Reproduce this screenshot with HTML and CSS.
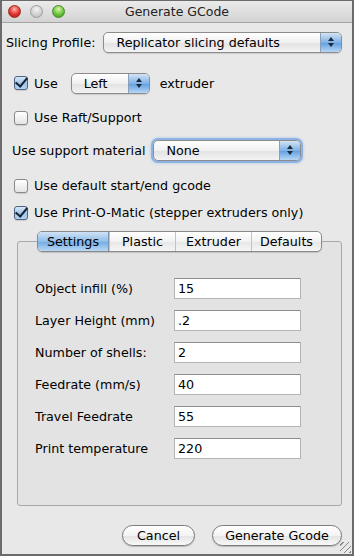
FILE: index.html
```html
<!DOCTYPE html>
<html lang="en">
<head>
    <meta charset="UTF-8">
    <title>Generate GCode</title>
    <link rel="stylesheet" href="styles.css">
</head>
<body>
    <div class="window">
        <div class="titlebar">
            <div class="lights">
                <span class="light red"></span>
                <span class="light gray"></span>
                <span class="light green"></span>
            </div>
            <div class="title">Generate GCode</div>
        </div>

        <div class="content">
            <div class="row profile-row">
                <span class="label">Slicing Profile:</span>
                <div class="select profile-select">
                    <span class="select-text">Replicator slicing defaults</span>
                    <span class="arrows"><span class="up"></span><span class="down"></span></span>
                </div>
            </div>

            <div class="row use-row">
                <span class="check checked"></span>
                <span class="label use-label">Use</span>
                <div class="select extruder-select">
                    <span class="select-text">Left</span>
                    <span class="arrows"><span class="up"></span><span class="down"></span></span>
                </div>
                <span class="label">extruder</span>
            </div>

            <div class="row raft-row">
                <span class="check"></span>
                <span class="label">Use Raft/Support</span>
            </div>

            <div class="row support-row">
                <span class="label">Use support material</span>
                <div class="select support-select focused">
                    <span class="select-text">None</span>
                    <span class="arrows"><span class="up"></span><span class="down"></span></span>
                </div>
            </div>

            <div class="row gcode-row">
                <span class="check"></span>
                <span class="label">Use default start/end gcode</span>
            </div>

            <div class="row pom-row">
                <span class="check checked"></span>
                <span class="label">Use Print-O-Matic (stepper extruders only)</span>
            </div>

            <div class="tabbox">
                <div class="tabs">
                    <span class="tab active">Settings</span>
                    <span class="tab">Plastic</span>
                    <span class="tab">Extruder</span>
                    <span class="tab">Defaults</span>
                </div>
                <div class="panel">
                    <div class="field"><span class="field-label">Object infill (%)</span><span class="input">15</span></div>
                    <div class="field"><span class="field-label">Layer Height (mm)</span><span class="input">.2</span></div>
                    <div class="field"><span class="field-label">Number of shells:</span><span class="input">2</span></div>
                    <div class="field"><span class="field-label">Feedrate (mm/s)</span><span class="input">40</span></div>
                    <div class="field"><span class="field-label">Travel Feedrate</span><span class="input">55</span></div>
                    <div class="field"><span class="field-label">Print temperature</span><span class="input">220</span></div>
                </div>
            </div>

            <div class="buttons">
                <span class="btn cancel-btn">Cancel</span>
                <span class="btn generate-btn">Generate Gcode</span>
            </div>
        </div>
        <span class="grip"></span>
    </div>
</body>
</html>
```

FILE: styles.css
```css
body {
    margin: 0;
    font-family: 'DejaVu Sans', 'Liberation Sans', sans-serif;
    font-size: 12.7px;
    color: #000;
    background: #e8e8e8;
}
.window {
    width: 354px;
    height: 556px;
    box-sizing: border-box;
    border: 1px solid #6b6b6b;
    border-width: 1px 2px 2px 2px;
    background: #e8e8e8;
    position: relative;
    overflow: hidden;
}
.titlebar {
    height: 21px;
    display: flex;
    align-items: center;
    position: relative;
    background: linear-gradient(#ebebeb, #d3d3d3);
    border-bottom: 1px solid #a4a4a4;
}
.lights {
    display: flex;
    gap: 9px;
    padding-left: 6px;
}
.light {
    width: 13px;
    height: 13px;
    border-radius: 50%;
    box-sizing: border-box;
}
.light.red {
    background: radial-gradient(circle at 50% 30%, #ffb3ad 0%, #e0322b 55%, #b01810 100%);
    border: 1px solid #9c2a24;
}
.light.gray {
    background: radial-gradient(circle at 50% 30%, #f2f2f2 0%, #cfcfcf 60%, #b3b3b3 100%);
    border: 1px solid #9d9d9d;
}
.light.green {
    background: radial-gradient(circle at 50% 30%, #d8f7b0 0%, #6cc33b 55%, #3d8f1a 100%);
    border: 1px solid #4a8a2c;
}
.title {
    position: absolute;
    left: 0;
    right: 0;
    text-align: center;
    color: #222;
    font-size: 12.5px;
}
.content {
    padding: 0 0 0 4px;
}
.row {
    display: flex;
    align-items: center;
}
.profile-row {
    margin-top: 8px;
    height: 22px;
}
.profile-row .label {
    margin-right: 8px;
}
.use-row {
    margin-top: 19px;
    height: 22px;
    padding-left: 8px;
}
.use-label {
    margin-right: 13px;
}
.raft-row {
    margin-top: 12px;
    height: 23px;
    padding-left: 8px;
}
.support-row {
    margin-top: 10px;
    height: 22px;
    padding-left: 6px;
}
.support-row .label {
    margin-right: 8px;
}
.gcode-row {
    margin-top: 15px;
    height: 19px;
    padding-left: 8px;
}
.pom-row {
    margin-top: 8px;
    height: 19px;
    padding-left: 8px;
}
.check {
    width: 14px;
    height: 14px;
    box-sizing: border-box;
    border: 1px solid #8a8a8a;
    border-radius: 3px;
    background: linear-gradient(#ffffff, #e4e4e4);
    margin-right: 6px;
    position: relative;
    box-shadow: 0 1px 1px rgba(0, 0, 0, 0.12);
}
.check.checked {
    background: linear-gradient(#d6e7f7, #9cc4ec 55%, #b4d4f3);
    border-color: #4f6480;
}
.check.checked::after {
    content: "";
    position: absolute;
    left: 3px;
    top: -2px;
    width: 5px;
    height: 10px;
    border: solid #1a2230;
    border-width: 0 2px 2px 0;
    transform: rotate(40deg);
}
.select {
    height: 21px;
    box-sizing: border-box;
    border: 1px solid #8c8c8c;
    border-radius: 5px;
    background: linear-gradient(#ffffff, #f0f0f0 50%, #e2e2e2 51%, #f3f3f3);
    display: flex;
    align-items: center;
    overflow: hidden;
    box-shadow: 0 1px 1px rgba(0, 0, 0, 0.12);
}
.select-text {
    flex: 1;
    padding-left: 12px;
}
.profile-select {
    width: 239px;
}
.extruder-select {
    width: 79px;
    margin-right: 10px;
}
.support-select {
    width: 148px;
}
.support-select.focused {
    box-shadow: 0 0 0 2px #8db2e3, 0 0 3px 2px #a9c6ee;
}
.arrows {
    width: 20px;
    height: 100%;
    border-left: 1px solid #8a9fb8;
    background: linear-gradient(#d3e4f5, #7fb1e6 50%, #5f9ee0 51%, #b6d6f5);
    display: flex;
    flex-direction: column;
    align-items: center;
    justify-content: center;
    gap: 2px;
}
.up, .down {
    width: 0;
    height: 0;
    border-left: 3px solid transparent;
    border-right: 3px solid transparent;
}
.up {
    border-bottom: 4px solid #1c2a3a;
}
.down {
    border-top: 4px solid #1c2a3a;
}
.tabbox {
    margin-top: 9px;
    margin-left: 11px;
    width: 325px;
}
.tabs {
    display: flex;
    width: 285px;
    height: 21px;
    margin-left: 20px;
    box-sizing: border-box;
    border: 1px solid #8a8a8a;
    border-radius: 5px;
    overflow: hidden;
    background: linear-gradient(#ffffff, #f2f2f2 50%, #e6e6e6 51%, #f6f6f6);
    position: relative;
    z-index: 1;
    box-shadow: 0 1px 1px rgba(0, 0, 0, 0.15);
}
.tab {
    display: flex;
    align-items: center;
    justify-content: center;
    border-left: 1px solid #c3c3c3;
}
.tab:first-child {
    border-left: none;
}
.tab:nth-child(1) { width: 70px; }
.tab:nth-child(2) { width: 65px; }
.tab:nth-child(3) { width: 75px; }
.tab:nth-child(4) { flex: 1; }
.tab.active {
    background: linear-gradient(#cfe2f5, #8fbde9 50%, #72abe3 51%, #b9d8f5);
    border-right: 1px solid #7d93ad;
}
.panel {
    margin-top: -11px;
    height: 265px;
    box-sizing: border-box;
    border: 1px solid #a8a8a8;
    border-radius: 3px;
    background: #e3e3e3;
    padding: 36px 0 0 17px;
}
.field {
    display: flex;
    align-items: center;
    height: 21px;
    margin-bottom: 11px;
}
.field-label {
    width: 139px;
}
.input {
    width: 127px;
    height: 21px;
    box-sizing: border-box;
    background: #fff;
    border: 1px solid #b5b5b5;
    border-top-color: #8e8e8e;
    padding-left: 3px;
    display: flex;
    align-items: center;
}
.buttons {
    display: flex;
    justify-content: flex-end;
    gap: 17px;
    margin-top: 19px;
    padding-right: 10px;
}
.btn {
    height: 21px;
    box-sizing: border-box;
    border: 1px solid #7a7a7a;
    border-radius: 11px;
    background: linear-gradient(#ffffff, #f3f3f3 50%, #e4e4e4 51%, #f8f8f8);
    display: flex;
    align-items: center;
    justify-content: center;
    box-shadow: 0 1px 1px rgba(0, 0, 0, 0.2);
}
.cancel-btn {
    width: 73px;
}
.generate-btn {
    width: 130px;
}
.grip {
    position: absolute;
    right: 1px;
    bottom: 1px;
    width: 11px;
    height: 11px;
    background: repeating-linear-gradient(135deg, transparent 0 2px, #8a8a8a 2px 3px, transparent 3px 4px);
}
```
